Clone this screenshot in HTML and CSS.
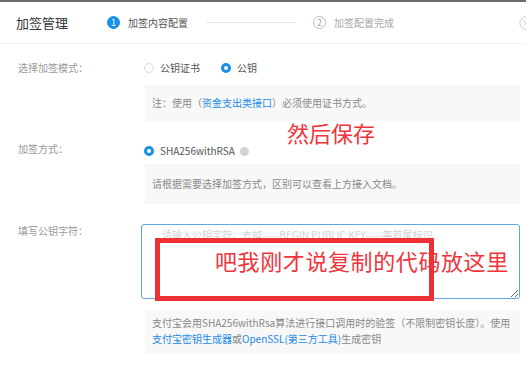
FILE: index.html
```html
<!DOCTYPE html>
<html lang="zh-CN">
<head>
  <meta charset="UTF-8" />
  <title>加签管理</title>
  <link rel="stylesheet" href="styles.css">
</head>
<body>
  <div class="dialog">
    <div class="header">
      <div class="title">加签管理</div>
      <div class="steps">
        <div class="step active"><span class="num">1</span>加签内容配置</div>
        <div class="step-line"></div>
        <div class="step"><span class="num">2</span>加签配置完成</div>
      </div>
      <svg class="close" width="14" height="14" viewBox="0 0 14 14">
        <circle cx="7" cy="7" r="6.2" fill="none" stroke="#cfcfcf" stroke-width="1"/>
        <path d="M4.6 4.6 L9.4 9.4 M9.4 4.6 L4.6 9.4" stroke="#cfcfcf" stroke-width="1"/>
      </svg>
    </div>

    <div class="row row-mode">
      <div class="label">选择加签模式：</div>
      <div class="field">
        <div class="radios">
          <label class="radio"><span class="dot"></span>公钥证书</label>
          <label class="radio checked"><span class="dot"></span>公钥</label>
        </div>
        <div class="tip tip-note">注：使用（<a>资金支出类接口</a>）必须使用证书方式。</div>
      </div>
    </div>

    <div class="row row-algo">
      <div class="label">加签方式：</div>
      <div class="field">
        <div class="radios">
          <label class="radio checked"><span class="dot"></span>SHA256withRSA<span class="help"></span></label>
        </div>
        <div class="tip tip-algo">请根据需要选择加签方式，区别可以查看上方接入文档。</div>
      </div>
    </div>

    <div class="row row-key">
      <div class="label">填写公钥字符：</div>
      <div class="field">
        <textarea class="key-input" placeholder="请输入公钥字符，去掉-----BEGIN PUBLIC KEY-----等首尾标识"></textarea>
        <div class="tip tip-key">支付宝会用SHA256withRsa算法进行接口调用时的验签（不限制密钥长度）。使用<br><a>支付宝密钥生成器</a>或<a>OpenSSL(第三方工具)</a>生成密钥</div>
      </div>
    </div>

    <!-- 标注 -->
    <div class="note note-save">然后保存</div>
    <div class="note-box"></div>
    <div class="note note-paste">吧我刚才说复制的代码放这里</div>
  </div>
</body>
</html>
```

FILE: styles.css
```css
* {
  box-sizing: border-box;
}

body {
  margin: 0;
  background: #fff;
  font-family: "Noto Sans CJK SC", "Liberation Sans", sans-serif;
  color: #666;
  overflow: hidden;
}

.dialog {
  position: relative;
  width: 526px;
  height: 370px;
  border-top: 2px solid #6b6b6b;
}

.header {
  display: flex;
  align-items: center;
  height: 42px;
  padding-left: 16px;
  border-bottom: 1px solid #f2f2f2;
}

.title {
  font-size: 13px;
  color: #333;
  width: 91px;
}

.steps {
  display: flex;
  align-items: center;
  font-size: 10px;
  color: #aaa;
}

.step {
  display: flex;
  align-items: center;
}

.step .num {
  width: 13px;
  height: 13px;
  border-radius: 50%;
  border: 1px solid #bbb;
  color: #aaa;
  font-size: 9px;
  display: flex;
  align-items: center;
  justify-content: center;
  margin-right: 8px;
}

.step.active {
  color: #555;
}

.step.active .num {
  background: #1890e8;
  border-color: #1890e8;
  color: #fff;
}

.step-line {
  width: 90px;
  height: 1px;
  background: #e6e6e6;
  margin: 0 17px 0 18px;
}

.close {
  margin-left: auto;
  margin-right: -7px;
  flex-shrink: 0;
}

.row {
  display: flex;
  padding-left: 18px;
}

.label {
  width: 125px;
  font-size: 10px;
  color: #999;
}

.field {
  width: 379px;
}

.radios {
  display: flex;
  align-items: center;
  gap: 21px;
  font-size: 10px;
  color: #555;
  padding-left: 1px;
}

.radio {
  display: flex;
  align-items: center;
}

.radio .dot {
  width: 10px;
  height: 10px;
  border-radius: 50%;
  border: 1px solid #ddd;
  margin-right: 6px;
}

.radio.checked .dot {
  border: 3px solid #1890e8;
  background: #fff;
}

.help {
  display: inline-block;
  width: 9px;
  height: 9px;
  border-radius: 50%;
  background: #d3d3d3;
  margin-left: 5px;
}

.tip {
  background: #f8f8f8;
  font-size: 10px;
  color: #888;
  margin-left: 2px;
  margin-right: 2px;
  padding: 0 7px;
}

.tip a {
  color: #1a8ae6;
  text-decoration: none;
}

.row-mode {
  margin-top: 17px;
  line-height: 14px;
}

.row-mode .label,
.row-mode .radios {
  height: 14px;
}

.tip-note {
  margin-top: 10px;
  height: 36px;
  line-height: 36px;
}

.row-algo {
  margin-top: 21px;
  line-height: 14px;
}

.row-algo .radios {
  height: 14px;
  margin-top: 2px;
}

.tip-algo {
  margin-top: 6px;
  height: 40px;
  line-height: 40px;
}

.row-key {
  margin-top: 20px;
}

.row-key .label {
  line-height: 14px;
}

.key-input {
  display: block;
  width: 379px;
  height: 75px;
  margin-left: -2px;
  border: 1px solid #5fa8dd;
  border-radius: 3px;
  font-family: inherit;
  font-size: 10px;
  padding: 2px 20px;
  resize: vertical;
}

.key-input::placeholder {
  color: #d2d2d2;
}

.tip-key {
  margin-top: 11px;
  padding-top: 5px;
  padding-bottom: 6px;
  line-height: 16px;
  height: 43px;
}

.note {
  position: absolute;
  color: #f2333b;
  font-size: 22px;
  line-height: 26px;
  white-space: nowrap;
}

.note-save {
  left: 287px;
  top: 117px;
}

.note-paste {
  left: 215px;
  top: 245px;
  letter-spacing: 0.6px;
}

.note-box {
  position: absolute;
  left: 155px;
  top: 236px;
  width: 279px;
  height: 63px;
  border: 5px solid #ee3035;
}
```
